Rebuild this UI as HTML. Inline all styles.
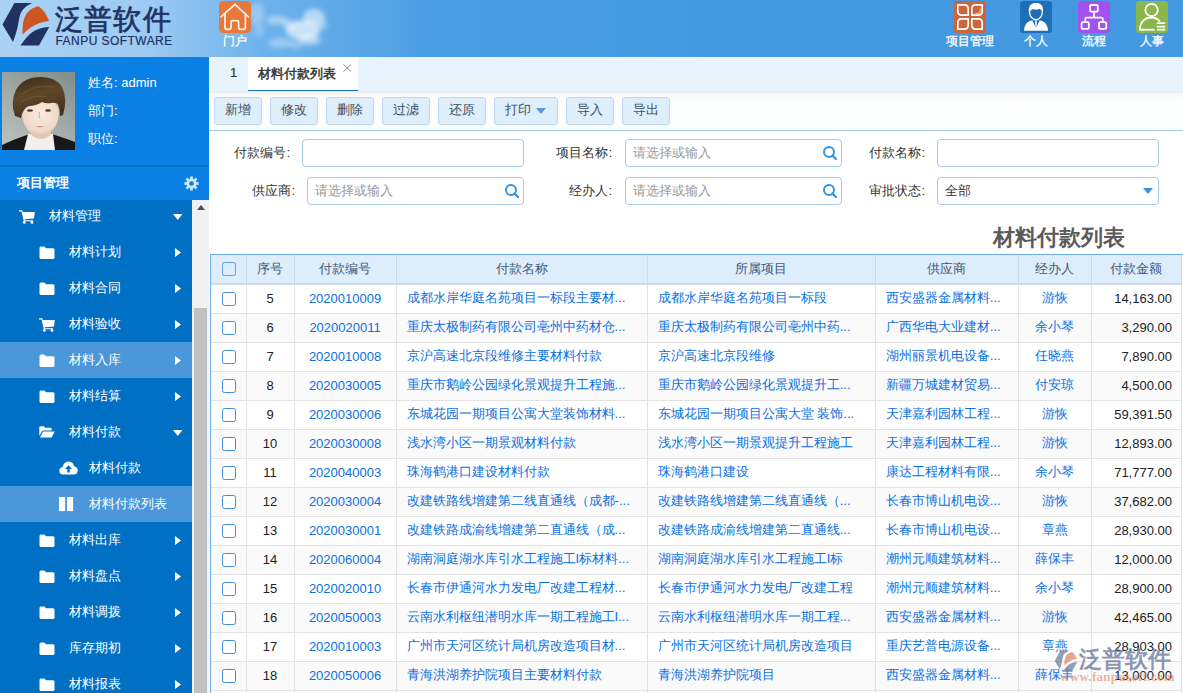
<!DOCTYPE html>
<html><head><meta charset="utf-8">
<style>
*{margin:0;padding:0;box-sizing:border-box}
html,body{width:1183px;height:693px;overflow:hidden;background:#fff;font-family:"Liberation Sans",sans-serif;font-size:13px;color:#333}
.abs{position:absolute}
#hdr{left:0;top:0;width:1183px;height:57px;background:linear-gradient(90deg,#aad2f5 0px,#9ccaf2 150px,#6eb2ec 260px,#4d9fe3 420px,#4499e0 700px,#4499e0 1183px)}
#side{left:0;top:57px;width:209px;height:636px;background:#0a80e4}
#sideline{left:0;top:165px;width:209px;height:2px;background:#0670c6}
#photo{left:2px;top:72px;width:73px;height:78px;background:#8a9a92}
.ui{left:88px;color:#fff;font-size:13px;line-height:16px}
#pm{left:17px;top:174px;color:#fff;font-size:13px;font-weight:bold;line-height:17px}
#menu{left:0;top:200px;width:192px;height:493px;background:#0070c4;overflow:hidden}
.mi{position:absolute;left:0;width:192px;height:36px;color:#fff;font-size:13px;line-height:35px}
.mi.hl{background:#4a97d9}
.mt{position:absolute;top:0}
#sb{left:192px;top:200px;width:17px;height:493px;background:#f1f1f1}
#thumb{left:194px;top:308px;width:13px;height:385px;background:#c1c1c1}
#tabbar{left:209px;top:57px;width:974px;height:34px;background:#e7f4fe}
#tab1{left:230px;top:65px;font-size:13px;color:#333;line-height:16px;-webkit-text-stroke:0.2px #333}
#tabact{left:248px;top:57px;width:110px;height:34px;background:#fff;border-bottom:1px solid #1b6fc0;box-shadow:0 1px 0 rgba(27,111,192,.4);padding-left:10px;line-height:33px;color:#333;-webkit-text-stroke:0.45px #333}
#toolbar{left:209px;top:91px;width:974px;height:40px;background:linear-gradient(#e8e8e8 0px,#f4f4f4 2px,#fafafa 5px,#fcfdfd 9px,#fdfefe 100%);border-bottom:1px solid #a6c8e4}
.btn{position:absolute;top:97px;height:28px;border:1px solid #c0d8ee;border-radius:3px;background:#deeefb;color:#3e4e64;font-size:13px;line-height:24px;text-align:center}
.lbl{position:absolute;font-size:13px;color:#333;line-height:16px;text-align:right}
.inp{position:absolute;height:28px;border:1px solid #a8cbe8;border-radius:4px;background:#fff;color:#999;font-size:13px;line-height:26px;padding-left:7px}
#ttl{left:993px;top:225px;font-size:22px;font-weight:bold;color:#5a5a5a;line-height:26px}
#tbl{left:210px;top:254px;width:990px;height:439px;border:1px solid #6aaae6;border-bottom:none;overflow:hidden;background:#fff}
table{border-collapse:collapse;table-layout:fixed;width:971px}
td,th{height:29px;border-right:1px solid #e3e3e3;border-bottom:1px solid #e3e3e3;font-size:13px;white-space:nowrap;overflow:hidden;text-overflow:ellipsis;font-weight:normal}
th{height:29px;background:#deedfb;color:#3f5a7a;padding-bottom:1px;border-right-color:#c6dcef;border-bottom:2px solid #cfdce8}
td{color:#0a70e2;text-align:center;padding-bottom:1px}
td.l{text-align:left;padding-left:10px;padding-right:4px}
td.r{text-align:right;padding-right:9px;color:#222}
td.n{color:#222}
tr.alt td{background:#fafafa}
.cb{display:inline-block;width:14px;height:14px;border:1.5px solid #3f90de;border-radius:2.5px;vertical-align:middle;background:#fff;margin-left:2px}
th .cb{background:transparent;border-color:#5a9fe0}
.cloud{position:absolute;border-radius:50%;background:radial-gradient(closest-side,rgba(255,255,255,.95),rgba(255,255,255,.5) 55%,rgba(255,255,255,0));filter:blur(1px)}
#lgt{left:55px;top:3px;font-size:28px;line-height:34px;color:#1f3262;letter-spacing:1.2px;white-space:nowrap;-webkit-text-stroke:0.7px #1f3262}
#lge{left:55.5px;top:34.5px;font-size:12px;line-height:12px;color:#1f3262;letter-spacing:0.45px;white-space:nowrap;-webkit-text-stroke:0.2px #1f3262}
.htxt{position:absolute;top:34px;font-size:12px;color:#fff;line-height:14px;text-align:center;-webkit-text-stroke:0.3px #fff}
.mic{position:absolute}
.car{position:absolute}
#wmt{left:1079px;top:645px;font-size:23px;line-height:28px;color:rgba(95,112,148,.72);white-space:nowrap;font-weight:bold}
#wmu{left:1060px;top:669px;font-family:"Liberation Serif",serif;font-size:13px;line-height:16px;color:rgba(222,140,100,.65);white-space:nowrap;letter-spacing:0.3px;font-weight:bold}

</style></head><body>
<div id="hdr" class="abs">
<svg class="abs" style="left:200px;top:0" width="150" height="57" viewBox="200 0 150 57">
<defs><filter id="cb" x="-50%" y="-50%" width="200%" height="200%"><feGaussianBlur stdDeviation="2.4"/></filter></defs>
<g fill="#fff" filter="url(#cb)">
<ellipse cx="257" cy="14" rx="7" ry="11" opacity=".3"/>
<ellipse cx="259" cy="30" rx="5" ry="7" opacity=".22"/>
<ellipse cx="303" cy="30" rx="17" ry="10" opacity=".65"/>
<ellipse cx="314" cy="17" rx="11" ry="8" opacity=".55"/>
<ellipse cx="322" cy="25" rx="5" ry="5" opacity=".4"/>
<ellipse cx="277" cy="20" rx="11" ry="4" opacity=".45"/>
<ellipse cx="289" cy="25" rx="6" ry="5" opacity=".4"/>
<ellipse cx="280" cy="43" rx="12" ry="5" opacity=".35"/>
<ellipse cx="310" cy="40" rx="11" ry="5" opacity=".5"/>
<ellipse cx="296" cy="45" rx="7" ry="4" opacity=".3"/>
</g></svg>
<svg class="abs" style="left:0;top:0" width="52" height="50" viewBox="0 0 52 50">
<path fill="#1f3262" d="M14.4 3 L32.6 3 C27 5 22 9 20 15 C18.5 20 18.5 28 13 42 L2.5 24.5 Z"/>
<path fill="#cd5722" d="M22.5 34.5 C22.5 26 22.8 19 27 13 C30 9 34 7.5 38.5 6.3 C43 9.5 47 15 49 21 C40 22 31 25.5 22.5 34.5 Z"/>
<path fill="#1f3262" d="M20.5 45.5 L39 45.5 L49.2 27 C40 27.5 34 30 28.5 35.5 C25 39 23 42 20.5 45.5 Z"/>
</svg>
<div class="abs" id="lgt">泛普软件</div>
<div class="abs" id="lge">FANPU SOFTWARE</div>
<svg class="abs" style="left:219px;top:1px" width="32" height="32" viewBox="0 0 32 32">
<rect width="32" height="32" rx="4.5" fill="#e8783a"/>
<g fill="none" stroke="#fff8f2" stroke-width="1.6" stroke-linecap="round" stroke-linejoin="round">
<path d="M1.8 16 L16 3.3 L29.6 16"/>
<path d="M6 12.3 V26.6 Q6 28.4 7.8 28.4 H10.3 Q12 28.4 12 26.6 V21.2 Q12 19.6 13.6 19.6 H18 Q19.6 19.6 19.6 21.2 V26.6 Q19.6 28.4 21.3 28.4 H24.7 Q26.4 28.4 26.4 26.6 V12.3"/>
</g>
</svg>
<div class="htxt" style="left:219px;width:32px">门户</div>
<svg class="abs" style="left:954px;top:1px" width="32" height="32" viewBox="0 0 32 32">
<rect width="32" height="32" rx="3.5" fill="#c9663b"/>
<g fill="none" stroke="#fff" stroke-width="1.7" stroke-linejoin="round">
<path d="M3.8 3.8 H10.3 Q14.2 3.8 14.2 7.7 V14.2 H7.7 Q3.8 14.2 3.8 10.3 Z"/>
<path d="M28.2 3.8 H21.7 Q17.8 3.8 17.8 7.7 V14.2 H24.3 Q28.2 14.2 28.2 10.3 Z"/>
<path d="M3.8 28.2 H10.3 Q14.2 28.2 14.2 24.3 V17.8 H7.7 Q3.8 17.8 3.8 21.7 Z"/>
<path d="M17.8 17.8 H24.3 Q28.2 17.8 28.2 21.7 V28.2 H21.7 Q17.8 28.2 17.8 24.3 Z"/>
</g>
<path d="M26 7.5 V11 Q26 12.4 24.6 12.4 H21.5" fill="none" stroke="#fff" stroke-width=".8" opacity=".8"/>
</svg>
<div class="htxt" style="left:940px;width:60px">项目管理</div>
<svg class="abs" style="left:1020px;top:1px" width="32" height="32" viewBox="0 0 32 32">
<rect width="32" height="32" rx="3.5" fill="#1e6eb8"/>
<path fill="#fff" d="M8.8 10 C8.3 4.5 11.5 1.9 16 1.9 C20.5 1.9 23.5 4.5 23 10 C23 15.5 20 19.3 16 19.3 C12 19.3 8.8 15.5 8.8 10 Z"/>
<path fill="#1e6eb8" d="M10.2 10.6 C10.8 8.6 12.3 7.8 13.8 8.3 C15.3 8.8 17 8.7 18.6 8.2 C20.2 7.7 21.2 9 21.8 10.6 C21.8 14.6 19.2 18.1 16 18.1 C12.8 18.1 10.2 14.6 10.2 10.6 Z"/>
<path fill="#fff" d="M4 29.8 C4.4 23.8 7 20.6 11.6 19.6 H20.4 C25 20.6 27.6 23.8 28 29.8 Z"/>
<path fill="#1e6eb8" d="M12.2 19.5 L15.9 26.8 L19.8 19.5 Z"/>
<path fill="#fff" d="M15.1 19.6 H16.8 L16.6 25 L15.95 26.2 L15.3 25 Z"/>
</svg>
<div class="htxt" style="left:1012px;width:48px">个人</div>
<svg class="abs" style="left:1078px;top:1px" width="32" height="32" viewBox="0 0 32 32">
<rect width="32" height="32" rx="3.5" fill="#a352ef"/>
<g fill="none" stroke="#fff" stroke-width="1.8" stroke-linejoin="round">
<rect x="12.1" y="4" width="7.7" height="6.6" rx="1.2"/>
<path d="M16 10.6 V16.6 M7.2 20.4 V18 Q7.2 16.6 8.6 16.6 H23.4 Q24.8 16.6 24.8 18 V20.4"/>
<rect x="3.6" y="21.2" width="7.2" height="6.7" rx="1.2"/>
<rect x="21" y="21.2" width="7.3" height="6.7" rx="1.2"/>
</g>
</svg>
<div class="htxt" style="left:1070px;width:48px">流程</div>
<svg class="abs" style="left:1136px;top:1px" width="32" height="32" viewBox="0 0 32 32">
<rect width="32" height="32" rx="3.5" fill="#89b74b"/>
<g fill="none" stroke="#fff" stroke-width="1.8">
<circle cx="15.6" cy="9" r="6.2"/>
<path d="M3.9 28.7 C3.9 21 9 16.5 15.2 16.5 C19 16.5 22 18.2 24 20.5"/>
<path d="M3 28.7 H18.6"/>
<path d="M20.9 22.1 H29.2 M20.9 25.6 H29.2 M20.9 28.7 H29.2"/>
</g>
</svg>
<div class="htxt" style="left:1128px;width:48px">人事</div>
</div>

<div id="side" class="abs"></div><div id="sideline" class="abs"></div>
<svg class="abs" style="left:2px;top:72px" width="73" height="78" viewBox="0 0 73 78">
<defs>
<linearGradient id="pbg" x1="0.8" y1="0" x2="0.2" y2="1"><stop offset="0" stop-color="#84928d"/><stop offset="0.55" stop-color="#a4ada9"/><stop offset="1" stop-color="#b9c0bc"/></linearGradient>
<radialGradient id="skin" cx="0.5" cy="0.4" r="0.65"><stop offset="0" stop-color="#f9ebe0"/><stop offset="0.7" stop-color="#f0d9c8"/><stop offset="1" stop-color="#d9b8a0"/></radialGradient>
<linearGradient id="hair" x1="0" y1="0" x2="0.3" y2="1"><stop offset="0" stop-color="#3a2918"/><stop offset="0.5" stop-color="#604729"/><stop offset="1" stop-color="#45321e"/></linearGradient>
</defs>
<rect width="73" height="78" fill="url(#pbg)"/>
<path d="M0 78 V73 Q10 68 22 64 L28 62 H50 L56 64 Q65 67 73 70 V78 Z" fill="#18171a"/>
<path d="M26 62 L22 78 H53 L51 62 Z" fill="#f3f0ef"/>
<path d="M30 56 H48 L49 63 Q39 71 29 63 Z" fill="#e6c8b0"/>
<path d="M20 40 Q20 55 30 62 Q37 67 46 62 Q57 55 57 40 Q57 27 38.5 27 Q20 27 20 40 Z" fill="url(#skin)"/>
<path d="M13 44 Q8 30 14 18 Q21 5 39 5 Q54 5 60 15 Q66 27 61 43 L58 44 Q58 37 56 32 Q53 30 49 31 Q44 32 40 30 Q34 34 27 34 Q21 36 19 46 Z" fill="url(#hair)"/>
<path d="M20 22 Q33 12 52 15 M18 31 Q29 22 45 25" stroke="#7c5e3c" stroke-width="1.6" fill="none" opacity=".5"/>
<ellipse cx="28" cy="38.5" rx="3" ry="1.2" fill="#4a4038"/>
<ellipse cx="46" cy="38.5" rx="3" ry="1.2" fill="#4a4038"/>
<path d="M37.5 40 Q36.5 45 38 47" stroke="#d4b39c" stroke-width="1" fill="none"/>
<path d="M32 52.5 Q38 55.5 44 52.5 Q38 58 32 52.5Z" fill="#cc8580"/>
<path d="M33.5 53.2 Q38 54.6 42.5 53.2" stroke="#fff" stroke-width=".8" fill="none" opacity=".8"/>
</svg>

<div class="abs ui" style="top:75px">姓名: admin</div>
<div class="abs ui" style="top:103px">部门:</div>
<div class="abs ui" style="top:131px">职位:</div>
<div class="abs" id="pm">项目管理</div>
<div id="menu" class="abs">
<div class="mi" style="top:-2px">
<svg class="mic" style="left:19px;top:12px" width="16" height="14" viewBox="0 0 16 14"><path fill="#fff" d="M0 0.2 H3.2 L3.8 2 H15.8 L15 8.4 L5.6 9.2 L5.9 10.3 H14 V11.3 H4.8 L2.5 1.4 H0 Z"/><circle cx="5.3" cy="12.4" r="1.4" fill="#fff"/><circle cx="13" cy="12.4" r="1.4" fill="#fff"/></svg>
<span class="mt" style="left:49px">材料管理</span>
<svg class="car" style="left:172.8px;top:15.7px" width="10" height="6"><path d="M0 0 H9.5 L4.75 6Z" fill="#fff"/></svg>
</div>
<div class="mi" style="top:34px">
<svg class="mic" style="left:39px;top:12px" width="16" height="14" viewBox="0 0 16 14"><path fill="#fff" d="M0.5 2 Q0.5 0.5 2 0.5 H5.5 L7 2.2 H14 Q15.5 2.2 15.5 3.7 V11.5 Q15.5 13 14 13 H2 Q0.5 13 0.5 11.5 Z"/></svg>
<span class="mt" style="left:69px">材料计划</span>
<svg class="car" style="left:175px;top:13.5px" width="6" height="9"><path d="M0 0 L6 4.5 L0 9Z" fill="#fff"/></svg>
</div>
<div class="mi" style="top:70px">
<svg class="mic" style="left:39px;top:12px" width="16" height="14" viewBox="0 0 16 14"><path fill="#fff" d="M0.5 2 Q0.5 0.5 2 0.5 H5.5 L7 2.2 H14 Q15.5 2.2 15.5 3.7 V11.5 Q15.5 13 14 13 H2 Q0.5 13 0.5 11.5 Z"/></svg>
<span class="mt" style="left:69px">材料合同</span>
<svg class="car" style="left:175px;top:13.5px" width="6" height="9"><path d="M0 0 L6 4.5 L0 9Z" fill="#fff"/></svg>
</div>
<div class="mi" style="top:106px">
<svg class="mic" style="left:39px;top:12px" width="16" height="14" viewBox="0 0 16 14"><path fill="#fff" d="M0 0.2 H3.2 L3.8 2 H15.8 L15 8.4 L5.6 9.2 L5.9 10.3 H14 V11.3 H4.8 L2.5 1.4 H0 Z"/><circle cx="5.3" cy="12.4" r="1.4" fill="#fff"/><circle cx="13" cy="12.4" r="1.4" fill="#fff"/></svg>
<span class="mt" style="left:69px">材料验收</span>
<svg class="car" style="left:175px;top:13.5px" width="6" height="9"><path d="M0 0 L6 4.5 L0 9Z" fill="#fff"/></svg>
</div>
<div class="mi hl" style="top:142px">
<svg class="mic" style="left:39px;top:12px" width="16" height="14" viewBox="0 0 16 14"><path fill="#fff" d="M0.5 2 Q0.5 0.5 2 0.5 H5.5 L7 2.2 H14 Q15.5 2.2 15.5 3.7 V11.5 Q15.5 13 14 13 H2 Q0.5 13 0.5 11.5 Z"/></svg>
<span class="mt" style="left:69px">材料入库</span>
<svg class="car" style="left:175px;top:13.5px" width="6" height="9"><path d="M0 0 L6 4.5 L0 9Z" fill="#fff"/></svg>
</div>
<div class="mi" style="top:178px">
<svg class="mic" style="left:39px;top:12px" width="16" height="14" viewBox="0 0 16 14"><path fill="#fff" d="M0.5 2 Q0.5 0.5 2 0.5 H5.5 L7 2.2 H14 Q15.5 2.2 15.5 3.7 V11.5 Q15.5 13 14 13 H2 Q0.5 13 0.5 11.5 Z"/></svg>
<span class="mt" style="left:69px">材料结算</span>
<svg class="car" style="left:175px;top:13.5px" width="6" height="9"><path d="M0 0 L6 4.5 L0 9Z" fill="#fff"/></svg>
</div>
<div class="mi" style="top:214px">
<svg class="mic" style="left:39px;top:12px" width="16" height="12" viewBox="0 0 16 12"><path fill="#fff" d="M0.3 1.5 Q0.3 0.3 1.5 0.3 H4.8 L6.2 1.8 H11.5 Q12.6 1.8 12.6 3 V4.4 H3.6 L0.3 9.8 Z M1 11.6 L4.2 5.4 H15.8 L12.6 11.6 Z"/></svg>
<span class="mt" style="left:69px">材料付款</span>
<svg class="car" style="left:172.8px;top:15.7px" width="10" height="6"><path d="M0 0 H9.5 L4.75 6Z" fill="#fff"/></svg>
</div>
<div class="mi" style="top:250px">
<svg class="mic" style="left:59px;top:11px" width="19" height="14" viewBox="0 0 19 14"><path fill="#fff" d="M4.2 13.5 Q0.3 13.5 0.3 9.8 Q0.3 6.5 3.6 6.2 Q4.2 1 9.5 0.5 Q14.3 0.8 15 5.2 Q18.7 6 18.7 9.6 Q18.6 13.5 14.8 13.5 Z"/><path fill="#0070c4" d="M9.5 4.2 L13 8 H10.7 V11.5 H8.3 V8 H6 Z"/></svg>
<span class="mt" style="left:89px">材料付款</span>
</div>
<div class="mi hl" style="top:286px">
<svg class="mic" style="left:59px;top:11.2px" width="15" height="15" viewBox="0 0 15 15"><rect x="0" y="0" width="6.1" height="14.1" fill="#fff"/><rect x="8" y="0" width="6.1" height="14.1" fill="#fff"/></svg>
<span class="mt" style="left:89px">材料付款列表</span>
</div>
<div class="mi" style="top:322px">
<svg class="mic" style="left:39px;top:12px" width="16" height="14" viewBox="0 0 16 14"><path fill="#fff" d="M0.5 2 Q0.5 0.5 2 0.5 H5.5 L7 2.2 H14 Q15.5 2.2 15.5 3.7 V11.5 Q15.5 13 14 13 H2 Q0.5 13 0.5 11.5 Z"/></svg>
<span class="mt" style="left:69px">材料出库</span>
<svg class="car" style="left:175px;top:13.5px" width="6" height="9"><path d="M0 0 L6 4.5 L0 9Z" fill="#fff"/></svg>
</div>
<div class="mi" style="top:358px">
<svg class="mic" style="left:39px;top:12px" width="16" height="14" viewBox="0 0 16 14"><path fill="#fff" d="M0.5 2 Q0.5 0.5 2 0.5 H5.5 L7 2.2 H14 Q15.5 2.2 15.5 3.7 V11.5 Q15.5 13 14 13 H2 Q0.5 13 0.5 11.5 Z"/></svg>
<span class="mt" style="left:69px">材料盘点</span>
<svg class="car" style="left:175px;top:13.5px" width="6" height="9"><path d="M0 0 L6 4.5 L0 9Z" fill="#fff"/></svg>
</div>
<div class="mi" style="top:394px">
<svg class="mic" style="left:39px;top:12px" width="16" height="14" viewBox="0 0 16 14"><path fill="#fff" d="M0.5 2 Q0.5 0.5 2 0.5 H5.5 L7 2.2 H14 Q15.5 2.2 15.5 3.7 V11.5 Q15.5 13 14 13 H2 Q0.5 13 0.5 11.5 Z"/></svg>
<span class="mt" style="left:69px">材料调拨</span>
<svg class="car" style="left:175px;top:13.5px" width="6" height="9"><path d="M0 0 L6 4.5 L0 9Z" fill="#fff"/></svg>
</div>
<div class="mi" style="top:430px">
<svg class="mic" style="left:39px;top:12px" width="16" height="14" viewBox="0 0 16 14"><path fill="#fff" d="M0.5 2 Q0.5 0.5 2 0.5 H5.5 L7 2.2 H14 Q15.5 2.2 15.5 3.7 V11.5 Q15.5 13 14 13 H2 Q0.5 13 0.5 11.5 Z"/></svg>
<span class="mt" style="left:69px">库存期初</span>
<svg class="car" style="left:175px;top:13.5px" width="6" height="9"><path d="M0 0 L6 4.5 L0 9Z" fill="#fff"/></svg>
</div>
<div class="mi" style="top:466px">
<svg class="mic" style="left:39px;top:12px" width="16" height="14" viewBox="0 0 16 14"><path fill="#fff" d="M0.5 2 Q0.5 0.5 2 0.5 H5.5 L7 2.2 H14 Q15.5 2.2 15.5 3.7 V11.5 Q15.5 13 14 13 H2 Q0.5 13 0.5 11.5 Z"/></svg>
<span class="mt" style="left:69px">材料报表</span>
<svg class="car" style="left:175px;top:13.5px" width="6" height="9"><path d="M0 0 L6 4.5 L0 9Z" fill="#fff"/></svg>
</div>
</div>
<div id="sb" class="abs"></div><div id="thumb" class="abs"></div>
<div id="tabbar" class="abs"></div>
<div class="abs" id="tab1">1</div>
<div class="abs" id="tabact">材料付款列表</div>
<div id="toolbar" class="abs"></div>
<div class="btn" style="left:214px;width:48px">新增</div>
<div class="btn" style="left:270px;width:48px">修改</div>
<div class="btn" style="left:326px;width:48px">删除</div>
<div class="btn" style="left:382px;width:48px">过滤</div>
<div class="btn" style="left:438px;width:48px">还原</div>
<div class="btn" style="left:494px;width:64px">打印<span style="display:inline-block;width:17px"></span></div>
<div class="btn" style="left:566px;width:48px">导入</div>
<div class="btn" style="left:622px;width:48px">导出</div>
<div class="lbl" style="left:200px;top:145px;width:90px">付款编号:</div>
<div class="inp" style="left:302px;top:139px;width:222px"></div>
<div class="lbl" style="left:200px;top:183px;width:95px">供应商:</div>
<div class="inp" style="left:307px;top:177px;width:217px">请选择或输入</div>
<div class="lbl" style="left:520px;top:145px;width:92px">项目名称:</div>
<div class="inp" style="left:625px;top:139px;width:217px">请选择或输入</div>
<div class="lbl" style="left:520px;top:183px;width:92px">经办人:</div>
<div class="inp" style="left:625px;top:177px;width:217px">请选择或输入</div>
<div class="lbl" style="left:830px;top:145px;width:95px">付款名称:</div>
<div class="inp" style="left:937px;top:139px;width:222px"></div>
<div class="lbl" style="left:830px;top:183px;width:95px">审批状态:</div>
<div class="inp" style="left:937px;top:177px;width:222px;color:#333">全部</div>
<div class="abs" id="ttl">材料付款列表</div>
<svg class="abs" style="left:183.6px;top:175.6px" width="15" height="15" viewBox="0 0 15 15"><path fill="#d2e7fb" fill-rule="evenodd" d="M6.17 2.68 L6.07 0.44 L8.93 0.44 L8.83 2.68 L9.96 3.15 L11.48 1.50 L13.50 3.52 L11.85 5.04 L12.32 6.17 L14.56 6.07 L14.56 8.93 L12.32 8.83 L11.85 9.96 L13.50 11.48 L11.48 13.50 L9.96 11.85 L8.83 12.32 L8.93 14.56 L6.07 14.56 L6.17 12.32 L5.04 11.85 L3.52 13.50 L1.50 11.48 L3.15 9.96 L2.68 8.83 L0.44 8.93 L0.44 6.07 L2.68 6.17 L3.15 5.04 L1.50 3.52 L3.52 1.50 L5.04 3.15 Z M7.50 5.20 a2.3 2.3 0 1 0 0.01 0 Z"/></svg>
<svg class="abs" style="left:197px;top:205px" width="8" height="5"><path d="M0 5 L4 0 L8 5Z" fill="#505050"/></svg>
<svg class="abs" style="left:343px;top:64px" width="9" height="8"><path d="M0.5 0.5 L8 7.5 M8 0.5 L0.5 7.5" stroke="#8a8a8a" stroke-width="1"/></svg>
<svg class="abs" style="left:536px;top:108px" width="10" height="6"><path d="M0 0 H10 L5 6Z" fill="#5a9ad6"/></svg>
<svg class="abs" style="left:1143px;top:188px" width="10" height="6"><path d="M0 0 H10 L5 6Z" fill="#3d8fdc"/></svg>
<svg class="abs" style="left:504px;top:183px" width="16" height="16"><circle cx="7" cy="7" r="5" fill="none" stroke="#2f93e6" stroke-width="2"/><path d="M10.5 10.5 L14 14" stroke="#2f93e6" stroke-width="2.2" stroke-linecap="round"/></svg>
<svg class="abs" style="left:822px;top:145px" width="16" height="16"><circle cx="7" cy="7" r="5" fill="none" stroke="#2f93e6" stroke-width="2"/><path d="M10.5 10.5 L14 14" stroke="#2f93e6" stroke-width="2.2" stroke-linecap="round"/></svg>
<svg class="abs" style="left:822px;top:183px" width="16" height="16"><circle cx="7" cy="7" r="5" fill="none" stroke="#2f93e6" stroke-width="2"/><path d="M10.5 10.5 L14 14" stroke="#2f93e6" stroke-width="2.2" stroke-linecap="round"/></svg>

<div id="tbl" class="abs"><table><colgroup>
<col style="width:35px">
<col style="width:48px">
<col style="width:102px">
<col style="width:251px">
<col style="width:228px">
<col style="width:143px">
<col style="width:73px">
<col style="width:90px">
</colgroup><tr><th><span class="cb"></span></th><th>序号</th><th>付款编号</th><th>付款名称</th><th>所属项目</th><th>供应商</th><th>经办人</th><th>付款金额</th></tr>
<tr><td><span class="cb"></span></td><td class="n">5</td><td>2020010009</td><td class="l">成都水岸华庭名苑项目一标段主要材...</td><td class="l">成都水岸华庭名苑项目一标段</td><td class="l">西安盛器金属材料...</td><td>游恢</td><td class="r">14,163.00</td></tr>
<tr class="alt"><td><span class="cb"></span></td><td class="n">6</td><td>2020020011</td><td class="l">重庆太极制药有限公司亳州中药材仓...</td><td class="l">重庆太极制药有限公司亳州中药...</td><td class="l">广西华电大业建材...</td><td>余小琴</td><td class="r">3,290.00</td></tr>
<tr><td><span class="cb"></span></td><td class="n">7</td><td>2020010008</td><td class="l">京沪高速北京段维修主要材料付款</td><td class="l">京沪高速北京段维修</td><td class="l">湖州丽景机电设备...</td><td>任晓燕</td><td class="r">7,890.00</td></tr>
<tr class="alt"><td><span class="cb"></span></td><td class="n">8</td><td>2020030005</td><td class="l">重庆市鹅岭公园绿化景观提升工程施...</td><td class="l">重庆市鹅岭公园绿化景观提升工...</td><td class="l">新疆万城建材贸易...</td><td>付安琼</td><td class="r">4,500.00</td></tr>
<tr><td><span class="cb"></span></td><td class="n">9</td><td>2020030006</td><td class="l">东城花园一期项目公寓大堂装饰材料...</td><td class="l">东城花园一期项目公寓大堂 装饰...</td><td class="l">天津嘉利园林工程...</td><td>游恢</td><td class="r">59,391.50</td></tr>
<tr class="alt"><td><span class="cb"></span></td><td class="n">10</td><td>2020030008</td><td class="l">浅水湾小区一期景观材料付款</td><td class="l">浅水湾小区一期景观提升工程施工</td><td class="l">天津嘉利园林工程...</td><td>游恢</td><td class="r">12,893.00</td></tr>
<tr><td><span class="cb"></span></td><td class="n">11</td><td>2020040003</td><td class="l">珠海鹤港口建设材料付款</td><td class="l">珠海鹤港口建设</td><td class="l">康达工程材料有限...</td><td>余小琴</td><td class="r">71,777.00</td></tr>
<tr class="alt"><td><span class="cb"></span></td><td class="n">12</td><td>2020030004</td><td class="l">改建铁路线增建第二线直通线（成都-...</td><td class="l">改建铁路线增建第二线直通线（...</td><td class="l">长春市博山机电设...</td><td>游恢</td><td class="r">37,682.00</td></tr>
<tr><td><span class="cb"></span></td><td class="n">13</td><td>2020030001</td><td class="l">改建铁路成渝线增建第二直通线（成...</td><td class="l">改建铁路成渝线增建第二直通线...</td><td class="l">长春市博山机电设...</td><td>章燕</td><td class="r">28,930.00</td></tr>
<tr class="alt"><td><span class="cb"></span></td><td class="n">14</td><td>2020060004</td><td class="l">湖南洞庭湖水库引水工程施工I标材料...</td><td class="l">湖南洞庭湖水库引水工程施工I标</td><td class="l">潮州元顺建筑材料...</td><td>薛保丰</td><td class="r">12,000.00</td></tr>
<tr><td><span class="cb"></span></td><td class="n">15</td><td>2020020010</td><td class="l">长春市伊通河水力发电厂改建工程材...</td><td class="l">长春市伊通河水力发电厂改建工程</td><td class="l">潮州元顺建筑材料...</td><td>余小琴</td><td class="r">28,900.00</td></tr>
<tr class="alt"><td><span class="cb"></span></td><td class="n">16</td><td>2020050003</td><td class="l">云南水利枢纽潜明水库一期工程施工I...</td><td class="l">云南水利枢纽潜明水库一期工程...</td><td class="l">西安盛器金属材料...</td><td>游恢</td><td class="r">42,465.00</td></tr>
<tr><td><span class="cb"></span></td><td class="n">17</td><td>2020010003</td><td class="l">广州市天河区统计局机房改造项目材...</td><td class="l">广州市天河区统计局机房改造项目</td><td class="l">重庆艺普电源设备...</td><td>章燕</td><td class="r">28,903.00</td></tr>
<tr class="alt"><td><span class="cb"></span></td><td class="n">18</td><td>2020050006</td><td class="l">青海洪湖养护院项目主要材料付款</td><td class="l">青海洪湖养护院项目</td><td class="l">西安盛器金属材料...</td><td>薛保丰</td><td class="r">13,000.00</td></tr>
<tr><td><span class="cb"></span></td><td class="n"></td><td></td><td class="l"></td><td class="l"></td><td class="l"></td><td></td><td class="r"></td></tr>
</table></div>
<svg class="abs" style="left:1052px;top:649px" width="28" height="24" viewBox="0 0 52 50">
<path fill="#6e7e9e" fill-opacity=".75" d="M14.4 3 L32.6 3 C27 5 22 9 20 15 C18.5 20 18.5 28 13 42 L2.5 24.5 Z"/>
<path fill="#e08a66" fill-opacity=".75" d="M22.5 34.5 C22.5 26 22.8 19 27 13 C30 9 34 7.5 38.5 6.3 C43 9.5 47 15 49 21 C40 22 31 25.5 22.5 34.5 Z"/>
<path fill="#6e7e9e" fill-opacity=".75" d="M20.5 45.5 L39 45.5 L49.2 27 C40 27.5 34 30 28.5 35.5 C25 39 23 42 20.5 45.5 Z"/>
</svg>
<div class="abs" id="wmt">泛普软件</div>
<div class="abs" id="wmu">www.fanpusoft.com</div>

</body></html>
